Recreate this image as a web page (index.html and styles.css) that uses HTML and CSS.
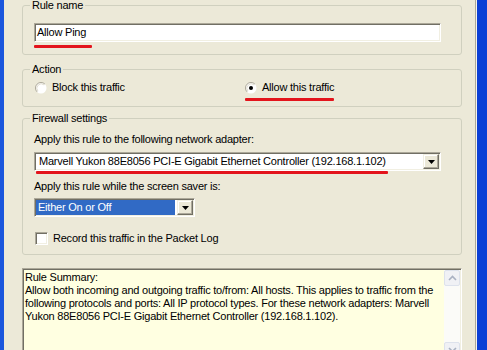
FILE: index.html
```html
<!DOCTYPE html>
<html lang="en">
<head>
    <meta charset="UTF-8">
    <meta name="viewport" content="width=device-width, initial-scale=1.0">
    <title>Edit Rule</title>
    <link rel="stylesheet" href="styles.css">
</head>
<body>
    <div class="frame">
        <div class="edge-left"></div>
        <div class="dialog">
            <fieldset class="group group-name">
                <legend>Rule name</legend>
                <div class="textbox">Allow Ping</div>
                <div class="mark mark-name"></div>
            </fieldset>

            <fieldset class="group group-action">
                <legend>Action</legend>
                <div class="radios">
                    <div class="radio">
                        <svg class="radio-icon" width="12" height="12" viewBox="0 0 12 12">
                            <circle cx="6" cy="6" r="5.5" fill="#fff"/>
                            <path d="M9.9 2.1 A5.5 5.5 0 0 0 2.1 9.9" fill="none" stroke="#aca899"/>
                            <path d="M9.1 2.9 A4.4 4.4 0 0 0 2.9 9.1" fill="none" stroke="#e2dfd2"/>
                        </svg>
                        <span>Block this traffic</span>
                    </div>
                    <div class="radio">
                        <svg class="radio-icon" width="12" height="12" viewBox="0 0 12 12">
                            <circle cx="6" cy="6" r="5.5" fill="#fff"/>
                            <path d="M9.9 2.1 A5.5 5.5 0 0 0 2.1 9.9" fill="none" stroke="#aca899"/>
                            <path d="M9.1 2.9 A4.4 4.4 0 0 0 2.9 9.1" fill="none" stroke="#e2dfd2"/>
                            <circle cx="6" cy="6" r="2" fill="#000"/>
                        </svg>
                        <span>Allow this traffic</span>
                    </div>
                </div>
                <div class="mark mark-allow"></div>
            </fieldset>

            <fieldset class="group group-firewall">
                <legend>Firewall settings</legend>
                <div class="field-label">Apply this rule to the following network adapter:</div>
                <div class="combo combo-adapter">
                    <div class="combo-value">Marvell Yukon 88E8056 PCI-E Gigabit Ethernet Controller (192.168.1.102)</div>
                    <div class="combo-btn">
                        <svg width="7" height="4" viewBox="0 0 7 4"><path d="M0 0h7L3.5 4z" fill="#000"/></svg>
                    </div>
                </div>
                <div class="mark mark-adapter"></div>
                <div class="field-label label-saver">Apply this rule while the screen saver is:</div>
                <div class="combo combo-saver">
                    <div class="combo-value selected">Either On or Off</div>
                    <div class="combo-btn">
                        <svg width="7" height="4" viewBox="0 0 7 4"><path d="M0 0h7L3.5 4z" fill="#000"/></svg>
                    </div>
                </div>
                <div class="check-row">
                    <span class="checkbox"></span>
                    <span>Record this traffic in the Packet Log</span>
                </div>
            </fieldset>

            <div class="summary">
                <div class="summary-text">Rule Summary:<br>Allow both incoming and outgoing traffic to/from: All hosts. This applies to traffic from the<br>following protocols and ports: All IP protocol types. For these network adapters: Marvell<br>Yukon 88E8056 PCI-E Gigabit Ethernet Controller (192.168.1.102).</div>
                <div class="scroll">
                    <div class="scroll-btn">
                        <svg width="9" height="6" viewBox="0 0 9 6"><path d="M1 5l3.5-3.5L8 5" fill="none" stroke="#a9b1c2" stroke-width="1.6"/></svg>
                    </div>
                    <div class="scroll-track"></div>
                    <div class="scroll-btn">
                        <svg width="9" height="6" viewBox="0 0 9 6"><path d="M1 1l3.5 3.5L8 1" fill="none" stroke="#a9b1c2" stroke-width="1.6"/></svg>
                    </div>
                </div>
            </div>
        </div>
        <div class="edge-right"></div>
    </div>
</body>
</html>
```

FILE: styles.css
```css
body {
    margin: 0;
    font-family: "Liberation Sans", Arial, sans-serif;
    font-size: 11px;
    line-height: 13px;
    letter-spacing: -0.22px;
    color: #000;
    background-color: #0b3fd6;
    overflow: hidden;
}
.frame {
    display: flex;
    height: 350px;
}
.edge-left {
    width: 4px;
    background-color: #1a56dd;
}
.dialog {
    width: 440px;
    padding: 0 13px 0 18px;
    background-color: #ece9d8;
    border-right: 1px solid #aca899;
}
.edge-right {
    flex: 1;
    background-color: #0b3fd6;
    border-left: 1px solid #f4f3ee;
}
.group {
    margin: 0;
    padding: 0 20px 0 11px;
    border: 1px solid #d0d0bf;
    border-radius: 3px;
    min-width: 0;
}
.group legend {
    padding: 0 2px;
    margin-left: -4px;
    line-height: 11px;
}
.group-name {
    padding-top: 12px;
    padding-bottom: 6px;
}
.group-action {
    margin-top: 9px;
    padding-top: 6px;
    padding-bottom: 5px;
}
.group-firewall {
    margin-top: 6px;
    padding-top: 9px;
    padding-bottom: 9px;
}
.textbox {
    box-sizing: border-box;
    height: 19px;
    padding-left: 2px;
    line-height: 17px;
    background-color: #fff;
    border: 1px solid;
    border-color: #aca899 #fff #fff #aca899;
    box-shadow: inset 1px 1px #716f64, inset -1px -1px #f1efe2;
}
.mark {
    height: 3px;
    background-color: #e3141c;
    border-radius: 1px;
}
.mark-name {
    width: 58px;
    margin-top: 3px;
}
.mark-allow {
    width: 89px;
    margin: 4px 0 0 211px;
}
.mark-adapter {
    width: 352px;
    margin-left: 2px;
}
.radios {
    display: grid;
    grid-template-columns: 210px 1fr;
}
.radio {
    display: flex;
    align-items: center;
    gap: 5px;
    padding-left: 1px;
}
.radio-icon {
    display: block;
}
.field-label {
    height: 13px;
}
.label-saver {
    margin-top: 6px;
}
.combo {
    box-sizing: border-box;
    display: flex;
    height: 19px;
    padding: 1px;
    margin-top: 6px;
    background-color: #fff;
    border: 1px solid;
    border-color: #aca899 #fff #fff #aca899;
    box-shadow: inset 1px 1px #716f64, inset -1px -1px #f1efe2;
}
.combo-saver {
    width: 161px;
    margin-top: 5px;
}
.combo-value {
    flex: 1;
    padding-left: 3px;
    line-height: 15px;
    white-space: nowrap;
    overflow: hidden;
}
.combo-value.selected {
    margin-right: 2px;
    background-color: #316ac5;
    color: #fff;
    padding-left: 2px;
}
.combo-btn {
    box-sizing: border-box;
    width: 16px;
    display: flex;
    align-items: center;
    justify-content: center;
    background-color: #ece9d8;
    border: 1px solid;
    border-color: #f1efe2 #716f64 #716f64 #f1efe2;
    box-shadow: inset -1px -1px #aca899, inset 1px 1px #fff;
}
.check-row {
    display: flex;
    align-items: center;
    gap: 5px;
    margin-top: 15px;
    padding-left: 1px;
    height: 13px;
}
.checkbox {
    box-sizing: border-box;
    width: 13px;
    height: 13px;
    background-color: #fff;
    border: 1px solid;
    border-color: #aca899 #fff #fff #aca899;
    box-shadow: inset 1px 1px #716f64, inset -1px -1px #f1efe2;
}
.summary {
    box-sizing: border-box;
    display: flex;
    height: 92px;
    margin-top: 13px;
    padding: 1px;
    background-color: #ffffe1;
    border: 1px solid;
    border-color: #aca899 #fff #fff #aca899;
    box-shadow: inset 1px 1px #716f64, inset -1px -1px #f1efe2;
}
.summary-text {
    flex: 1;
    padding: 1px 0 0 1px;
    white-space: nowrap;
    overflow: hidden;
}
.scroll {
    width: 16px;
    display: flex;
    flex-direction: column;
    background-color: #fbfbf8;
}
.scroll-btn {
    box-sizing: border-box;
    height: 16px;
    display: flex;
    align-items: center;
    justify-content: center;
    background-color: #f0f1f5;
    border: 1px solid #dde2ec;
    border-radius: 2px;
}
.scroll-track {
    flex: 1;
}
```
